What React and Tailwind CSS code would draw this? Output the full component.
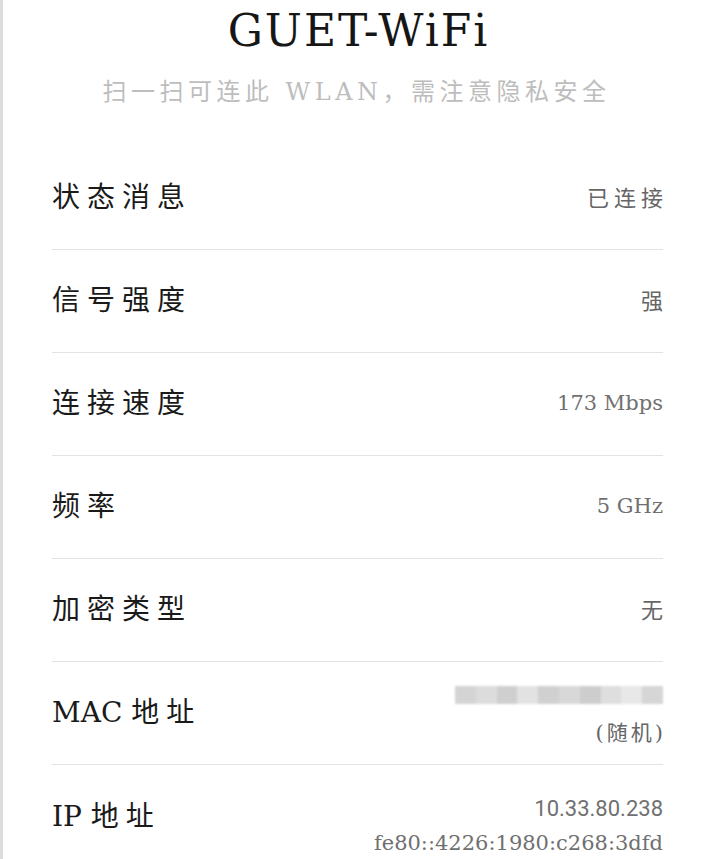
const rows = [
  { label: '状态消息', value: '已连接', cjk: true },
  { label: '信号强度', value: '强', cjk: true },
  { label: '连接速度', value: '173 Mbps' },
  { label: '频率', value: '5 GHz' },
  { label: '加密类型', value: '无', cjk: true },
];

const serif = "font-['DejaVu_Serif','Liberation_Serif','Noto_Sans_CJK_SC',serif]";

function Row({ label, children, last }) {
  return (
    <div className={`flex items-center justify-between h-[103px] ${last ? '' : 'border-b border-[#e3e3e3]'}`}>
      <div className={`text-[28px] text-[#1a1a1a] ${serif}`}>{label}</div>
      <div className="flex flex-col items-end">{children}</div>
    </div>
  );
}

function Cjk({ children }) {
  return <span className="tracking-[7px]">{children}</span>;
}

const shades = [
  'bg-[#d4d4d4]', 'bg-[#dcdcdc]', 'bg-[#cfcfcf]', 'bg-[#e2e2e2]', 'bg-[#d0d0d0]',
  'bg-[#d8d8d8]', 'bg-[#cdcdcd]', 'bg-[#dedede]', 'bg-[#e8e8e8]', 'bg-[#d6d6d6]',
];

function MacBlur() {
  return (
    <div className="flex h-[18px] w-[208px] blur-[1px]">
      {shades.map((c, i) => (
        <div key={i} className={`flex-1 h-full ${c}`} />
      ))}
    </div>
  );
}

export default function App() {
  return (
    <div className={`min-h-[859px] w-[710px] bg-white border-l-[3px] border-[#dcdcdc] ${serif}`}>
      <div className="flex flex-col items-center pt-[2px]">
        <h1 className="text-[44px] leading-[58px] text-[#161616] tracking-[2px] ml-[4px]">GUET-WiFi</h1>
        <p className="mt-[16px] text-[24px] leading-[32px] tracking-[4.5px] text-[#bdbdbd]">
          扫一扫可连此 WLAN，需注意隐私安全
        </p>
      </div>
      <div className="mt-[39px] ml-[49px] w-[611px]">
        {rows.map((r) => (
          <Row key={r.label} label={<Cjk>{r.label}</Cjk>}>
            <span
              className={r.cjk ? 'text-[22px] tracking-[5px] mr-[-5px] text-[#666]' : 'text-[21px] text-[#707070]'}
            >
              {r.value}
            </span>
          </Row>
        ))}
        <Row label={<>MAC <Cjk>地址</Cjk></>}>
          <div className="pt-[10px]"><MacBlur /></div>
          <span className="mt-[14px] text-[21px] tracking-[3px] mr-[-3px] text-[#666]">(随机)</span>
        </Row>
        <Row label={<>IP <Cjk>地址</Cjk></>} last>
          <span className="mt-[20px] text-[22px] leading-[32px] text-[#707070] font-['Roboto',sans-serif]">10.33.80.238</span>
          <span className="text-[21px] leading-[36px] text-[#707070]">fe80::4226:1980:c268:3dfd</span>
        </Row>
      </div>
    </div>
  );
}
